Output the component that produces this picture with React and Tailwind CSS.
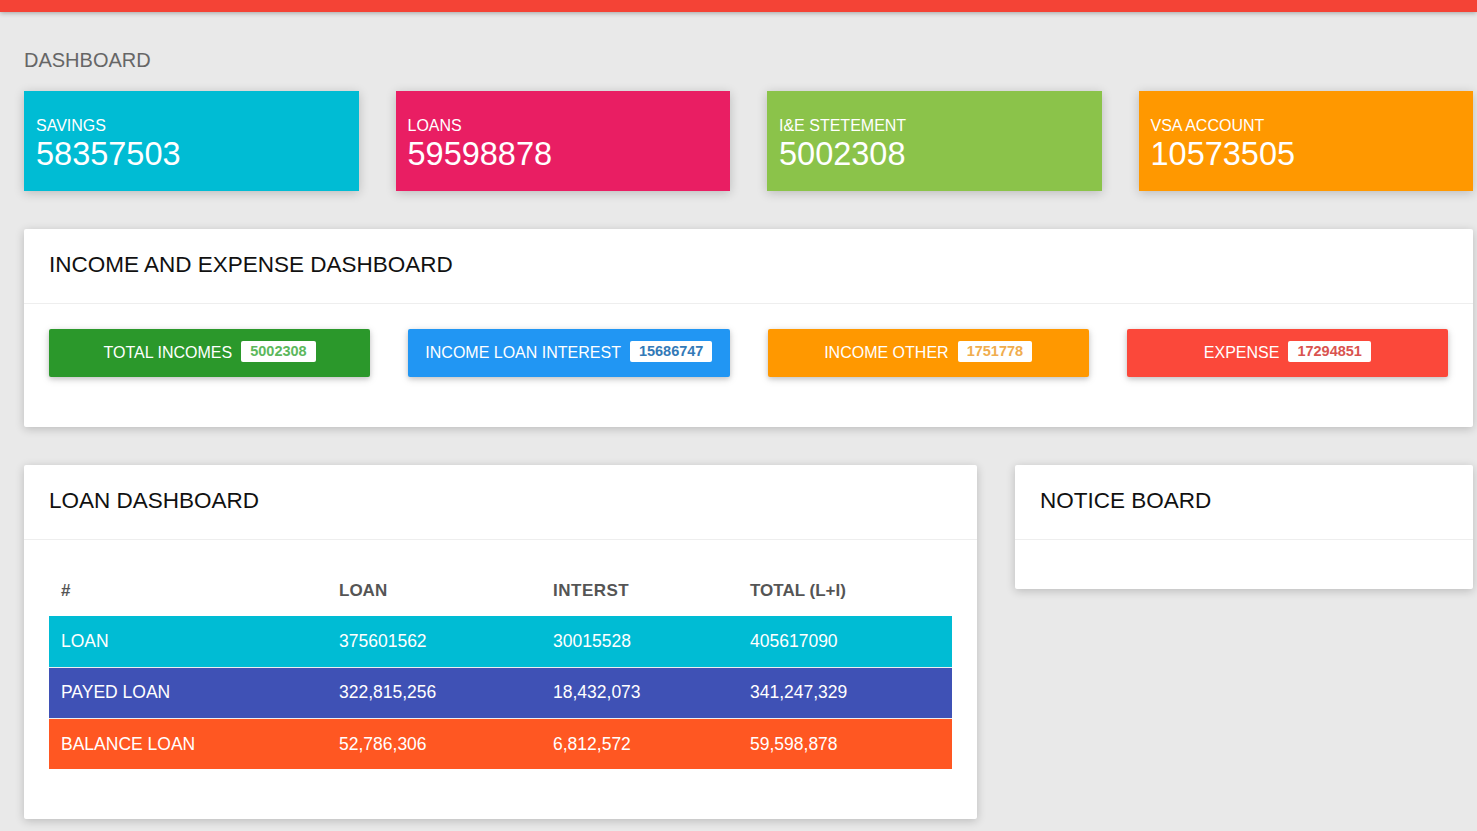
const stats = [
  { label: 'SAVINGS', value: '58357503', bg: 'bg-[#00bcd4]' },
  { label: 'LOANS', value: '59598878', bg: 'bg-[#e91e63]' },
  { label: 'I&E STETEMENT', value: '5002308', bg: 'bg-[#8bc34a]' },
  { label: 'VSA ACCOUNT', value: '10573505', bg: 'bg-[#ff9800]' },
];

const incomeButtons = [
  { label: 'TOTAL INCOMES', value: '5002308', bg: 'bg-[#2b982b]', text: 'text-[#5cb85c]' },
  { label: 'INCOME LOAN INTEREST', value: '15686747', bg: 'bg-[#2196f3]', text: 'text-[#337ab7]' },
  { label: 'INCOME OTHER', value: '1751778', bg: 'bg-[#ff9800]', text: 'text-[#f0ad4e]' },
  { label: 'EXPENSE', value: '17294851', bg: 'bg-[#fb483a]', text: 'text-[#d9534f]' },
];

const loanRows = [
  { name: 'LOAN', loan: '375601562', interest: '30015528', total: '405617090', bg: 'bg-[#00bcd4]' },
  { name: 'PAYED LOAN', loan: '322,815,256', interest: '18,432,073', total: '341,247,329', bg: 'bg-[#3f51b5]' },
  { name: 'BALANCE LOAN', loan: '52,786,306', interest: '6,812,572', total: '59,598,878', bg: 'bg-[#ff5722]' },
];

function Card({ title, children }) {
  return (
    <div className="bg-white rounded-[2px] shadow-[0_2px_10px_rgba(0,0,0,0.2)]">
      <div className="h-[75px] flex items-center px-[25px] pb-[3px] border-b border-[#eeeeee]">
        <h2 className="text-[22.5px] leading-[26px] text-[#111]">{title}</h2>
      </div>
      {children}
    </div>
  );
}

export default function App() {
  return (
    <div className="min-h-screen bg-[#e9e9e9] font-['Liberation_Sans',Arial,sans-serif]">
      <div className="h-[12px] bg-[#f44336] shadow-[0_1px_5px_rgba(0,0,0,0.3)]" />

      <div className="pl-[24px] pr-[4px] pt-[37px] pb-[40px]">
        <h1 className="text-[20px] leading-[23px] text-[#666] mb-[19px]">DASHBOARD</h1>

        {/* info boxes */}
        <div className="grid grid-cols-4 gap-[37px]">
          {stats.map((s) => (
            <div
              key={s.label}
              className={`${s.bg} h-[100px] flex flex-col justify-center px-[12px] pt-[6px] text-white shadow-[0_2px_10px_rgba(0,0,0,0.2)]`}
            >
              <div className="text-[16px] leading-[16px]">{s.label}</div>
              <div className="text-[32.5px] leading-[33px] mt-[4px]">{s.value}</div>
            </div>
          ))}
        </div>

        <div className="mt-[38px]">
          <Card title="INCOME AND EXPENSE DASHBOARD">
            <div className="px-[25px] pt-[25px] pb-[50px] grid grid-cols-4 gap-[38px]">
              {incomeButtons.map((b) => (
                <div
                  key={b.label}
                  className={`${b.bg} h-[48px] rounded-[2px] flex items-center justify-center text-white text-[16px] shadow-[0_2px_5px_rgba(0,0,0,0.16),0_2px_10px_rgba(0,0,0,0.12)]`}
                >
                  <span>{b.label}</span>
                  <span className={`ml-[9px] mb-[3px] bg-white ${b.text} rounded-[2px] px-[9px] h-[21px] flex items-center text-[14.5px] font-bold`}>
                    {b.value}
                  </span>
                </div>
              ))}
            </div>
          </Card>
        </div>

        <div className="mt-[38px] grid grid-cols-[953px_1fr] gap-[38px] items-start">
          <Card title="LOAN DASHBOARD">
            <div className="px-[25px] pt-[25px] pb-[50px]">
              <table className="w-full border-collapse">
                <thead>
                  <tr className="h-[51px] text-left text-[17px] font-bold text-[#555]">
                    <th className="w-[278px] px-[12px]">#</th>
                    <th className="w-[214px] px-[12px]">LOAN</th>
                    <th className="w-[197px] px-[12px] tracking-[0.5px]">INTERST</th>
                    <th className="px-[12px]">TOTAL (L+I)</th>
                  </tr>
                </thead>
                <tbody>
                  {loanRows.map((r, i) => (
                    <tr
                      key={r.name}
                      className={`${r.bg} h-[51px] text-white text-[17.5px] ${i > 0 ? 'border-t border-[#eeeeee]' : ''}`}
                    >
                      <td className="px-[12px]">{r.name}</td>
                      <td className="px-[12px]">{r.loan}</td>
                      <td className="px-[12px]">{r.interest}</td>
                      <td className="px-[12px]">{r.total}</td>
                    </tr>
                  ))}
                </tbody>
              </table>
            </div>
          </Card>

          <Card title="NOTICE BOARD">
            <div className="h-[49px]" />
          </Card>
        </div>
      </div>
    </div>
  );
}
